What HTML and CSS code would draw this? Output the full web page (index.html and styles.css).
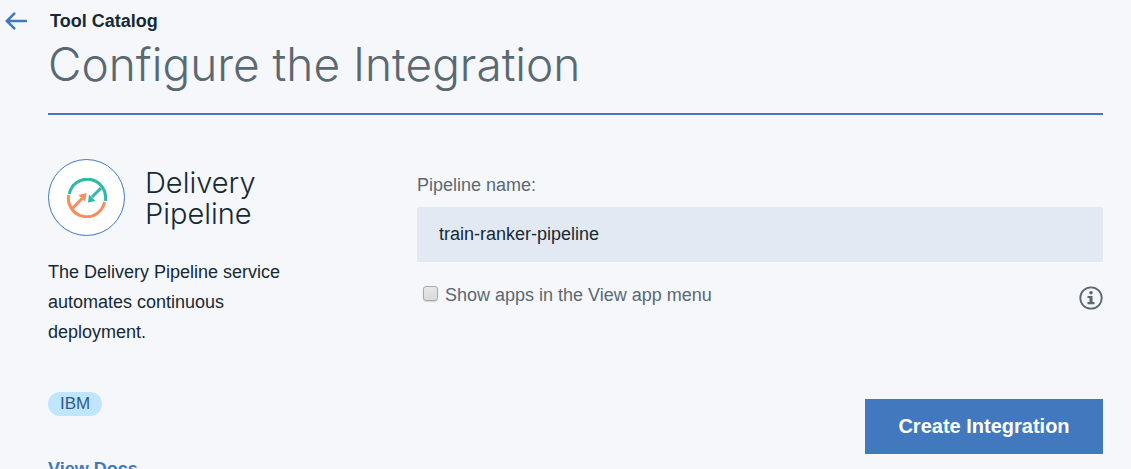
FILE: index.html
```html
<!DOCTYPE html>
<html lang="en">
<head>
<meta charset="utf-8">
<meta name="viewport" content="width=device-width, initial-scale=1">
<title>Configure the Integration</title>
<link rel="stylesheet" href="styles.css">
</head>
<body>
<div class="page">
  <header class="page-header">
    <nav class="breadcrumb">
      <a class="back-link" href="#" aria-label="Back">
        <svg class="back-icon" viewBox="0 0 22 20" aria-hidden="true"><path d="M22 10H2M10 1.800 1.800 10 10 18.200" fill="none" stroke="currentColor" stroke-width="2.600"/></svg>
      </a>
      <a class="catalog-link" href="#">Tool Catalog</a>
    </nav>
    <h1 class="page-title">Configure the Integration</h1>
  </header>
  <main class="content">
    <aside class="service">
      <div class="service-head">
        <div class="service-logo">
          <svg class="pipeline-icon" viewBox="0 0 40 40" aria-hidden="true">
            <g fill="none" stroke="#2fb8a3" stroke-width="3">
              <path d="M2.300 16A18 18 0 0 1 38.300 23"/>
              <path d="M34 10 25 19"/>
            </g>
            <path d="M21 24.500 22 16.500 28.500 23Z" fill="#2fb8a3"/>
            <g fill="none" stroke="#f98b5c" stroke-width="3">
              <path d="M1.700 17A18.200 18.200 0 0 0 37.500 24"/>
              <path d="M5 31 15 20.500"/>
            </g>
            <path d="M19.500 15 11.500 17 18 23.500Z" fill="#f98b5c"/>
          </svg>
        </div>
        <h2 class="service-name">Delivery Pipeline</h2>
      </div>
      <p class="service-text">The Delivery Pipeline service automates continuous deployment.</p>
      <span class="tag">IBM</span>
      <a class="docs-link" href="#">View Docs</a>
    </aside>
    <form class="settings">
      <label class="field-label" for="pipeline-name">Pipeline name:</label>
      <input class="field-input" id="pipeline-name" type="text" value="train-ranker-pipeline">
      <div class="option-row">
        <input class="option-box" id="show-apps" type="checkbox">
        <label class="option-label" for="show-apps">Show apps in the View app menu</label>
        <button class="info-button" type="button" aria-label="More information">
          <svg class="info-icon" viewBox="0 0 24 24" aria-hidden="true">
            <circle cx="12" cy="12" r="10.700" fill="none" stroke="currentColor" stroke-width="1.800"/>
            <circle cx="12" cy="6.800" r="1.800" fill="currentColor"/>
            <path d="M8.500 10H13.500V16H15.500V18.200H8.500V16H10.500V12H8.500Z" fill="currentColor"/>
          </svg>
        </button>
      </div>
      <button class="create-button" type="submit">Create Integration</button>
    </form>
  </main>
</div>
</body>
</html>
```
FILE: styles.css
```css
* {
  box-sizing: border-box;
}

html {
  overflow: hidden;
}

body {
  margin: 0;
  background: #f5f7fb;
  color: #152935;
  font-family: "Liberation Sans", Arial, sans-serif;
  font-size: 18px;
}

h1,
h2,
p {
  margin: 0;
}

a {
  text-decoration: none;
}

button {
  border: 0;
  padding: 0;
  font: inherit;
  cursor: pointer;
}

.page {
  padding: 10px 28px 0 48px;
}

.page-header {
  border-bottom: 2px solid #4178be;
  padding-bottom: 17px;
}

.breadcrumb {
  display: flex;
  align-items: center;
  height: 22px;
  margin-left: -43px;
  gap: 23px;
}

.back-link {
  display: flex;
  color: #4178be;
}

.back-icon {
  width: 22px;
  height: 20px;
}

.catalog-link {
  color: #152935;
  font-weight: 700;
}

.page-title {
  color: #5a6872;
  font-family: Inter, "Liberation Sans", sans-serif;
  font-size: 46px;
  font-weight: 300;
  line-height: 64px;
}

.content {
  display: flex;
  gap: 89px;
  padding-top: 44px;
}

.service {
  display: flex;
  flex-direction: column;
  align-items: flex-start;
  flex: 0 0 280px;
}

.service-head {
  display: flex;
  align-items: center;
  gap: 20px;
}

.service-logo {
  display: flex;
  align-items: center;
  justify-content: center;
  flex: none;
  width: 77px;
  height: 77px;
  border: 1px solid #4178be;
  border-radius: 50%;
  background: #fff;
}

.pipeline-icon {
  width: 40px;
  height: 40px;
}

.service-name {
  font-family: Inter, "Liberation Sans", sans-serif;
  font-size: 29px;
  font-weight: 300;
  line-height: 31px;
}

.service-text {
  width: 240px;
  margin-top: 21px;
  line-height: 30px;
}

.tag {
  margin-top: 45px;
  padding: 0 12px;
  border-radius: 12px;
  background: #c0e6ff;
  color: #325c80;
  font-size: 17px;
  line-height: 24px;
}

.docs-link {
  margin-top: 41px;
  color: #4178be;
  font-weight: 700;
  line-height: 24px;
}

.settings {
  display: flex;
  flex-direction: column;
  flex: 1;
  min-width: 0;
  padding-top: 14px;
}

.field-label {
  color: #5a6872;
  line-height: 24px;
}

.field-input {
  width: 100%;
  height: 55px;
  margin-top: 10px;
  border: 0;
  padding: 0 22px;
  background: #e3e9f3;
  color: #152935;
  font: inherit;
}

.option-row {
  display: flex;
  align-items: center;
  margin-top: 20px;
  padding-left: 6px;
}

.option-box {
  appearance: none;
  width: 15px;
  height: 15px;
  margin: 0 7px 6px 0;
  border: 1px solid #a9a9a9;
  border-radius: 3px;
  background: linear-gradient(#e6e6e6, #dadada);
  box-shadow: 0 1px 1px #d4d6da;
}

.option-box:checked {
  background: #4178be;
}

.option-label {
  margin-bottom: 2px;
  color: #5a6872;
  line-height: 24px;
}

.info-button {
  display: flex;
  margin-top: 4px;
  margin-left: auto;
  background: none;
  color: #5a6872;
}

.info-icon {
  width: 24px;
  height: 24px;
}

.create-button {
  align-self: flex-end;
  width: 238px;
  height: 55px;
  margin-top: 89px;
  background: #4178be;
  color: #fff;
  font-size: 20px;
  font-weight: 700;
}
```
